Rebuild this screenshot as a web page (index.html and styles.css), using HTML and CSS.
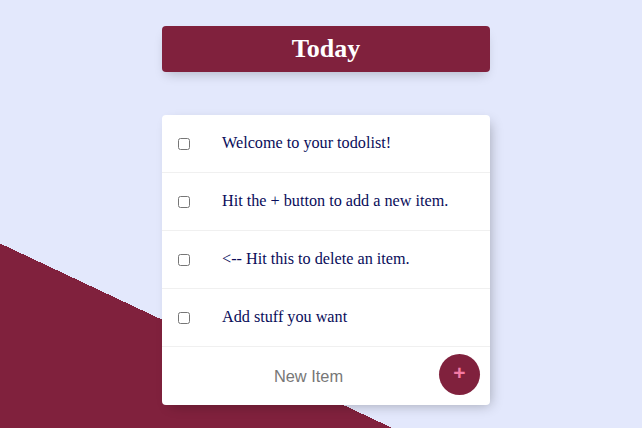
FILE: index.html
```
<!DOCTYPE html>
<html lang="en">
<head>
<meta charset="utf-8">
<title>Today</title>
<link rel="stylesheet" href="styles.css">
</head>
<body>
<div class="page">
  <div class="heading">
    <h1>Today</h1>
  </div>
  <div class="box">
    <div class="item">
      <input type="checkbox" class="check">
      <p>Welcome to your todolist!</p>
    </div>
    <div class="item">
      <input type="checkbox" class="check">
      <p>Hit the + button to add a new item.</p>
    </div>
    <div class="item">
      <input type="checkbox" class="check">
      <p>&lt;-- Hit this to delete an item.</p>
    </div>
    <div class="item">
      <input type="checkbox" class="check">
      <p>Add stuff you want</p>
    </div>
    <form class="item new-item">
      <input type="text" class="new-text" name="newItem" placeholder="New Item" autocomplete="off">
      <button type="button" class="add">+</button>
    </form>
  </div>
</div>
</body>
</html>
```
FILE: styles.css
```
html, body {
  margin: 0;
  padding: 0;
}

.page {
  box-sizing: border-box;
  height: 100vh;
  overflow: hidden;
  padding: 26px 0 0 10px;
  background: linear-gradient(25.2deg, #80213d 0, #80213d 167px, #e3e8fc 167px, #e3e8fc 100%);
}

.heading {
  width: 328px;
  margin: 0 auto;
  background-color: #80213d;
  border-radius: 4px;
  box-shadow: 0 6px 12px -4px rgba(0, 0, 0, 0.22);
  text-align: center;
}

.heading h1 {
  margin: 0;
  padding: 8px;
  font-family: "Liberation Serif", "Times New Roman", serif;
  font-size: 26px;
  line-height: 30px;
  font-weight: bold;
  color: #ffffff;
}

.box {
  width: 328px;
  margin: 43px auto 0;
  background: #ffffff;
  border-radius: 4px;
  box-shadow: 4px 4px 12px -4px rgba(0, 0, 0, 0.3);
}

.item {
  height: 57px;
  display: flex;
  align-items: center;
  border-bottom: 1px solid #f0f0f0;
}

.item:last-child {
  border-bottom: 0;
  height: 58px;
}

.check {
  width: 12px;
  height: 12px;
  margin: 0 16px;
  flex: none;
}

.item p {
  margin: 0;
  padding: 0 16px;
  font-family: "Liberation Serif", "Times New Roman", serif;
  font-size: 16.2px;
  color: #0a0d5a;
}

.new-text {
  flex: 1;
  min-width: 0;
  margin: 0 0 0 16px;
  padding: 0;
  height: 40px;
  border: none;
  outline: none;
  background: transparent;
  text-align: center;
  font-family: "Liberation Sans", Arial, sans-serif;
  font-size: 16.4px;
  color: #333333;
}

.new-text::placeholder {
  color: #777777;
}

.add {
  flex: none;
  width: 41px;
  height: 41px;
  margin: 0 10px 4px 0;
  padding: 0 0 3px;
  border: 0;
  border-radius: 50%;
  background-color: #80213d;
  color: #f47aa4;
  font-family: "Liberation Sans", Arial, sans-serif;
  font-size: 21px;
  font-weight: bold;
  line-height: 21px;
  cursor: pointer;
}
```
